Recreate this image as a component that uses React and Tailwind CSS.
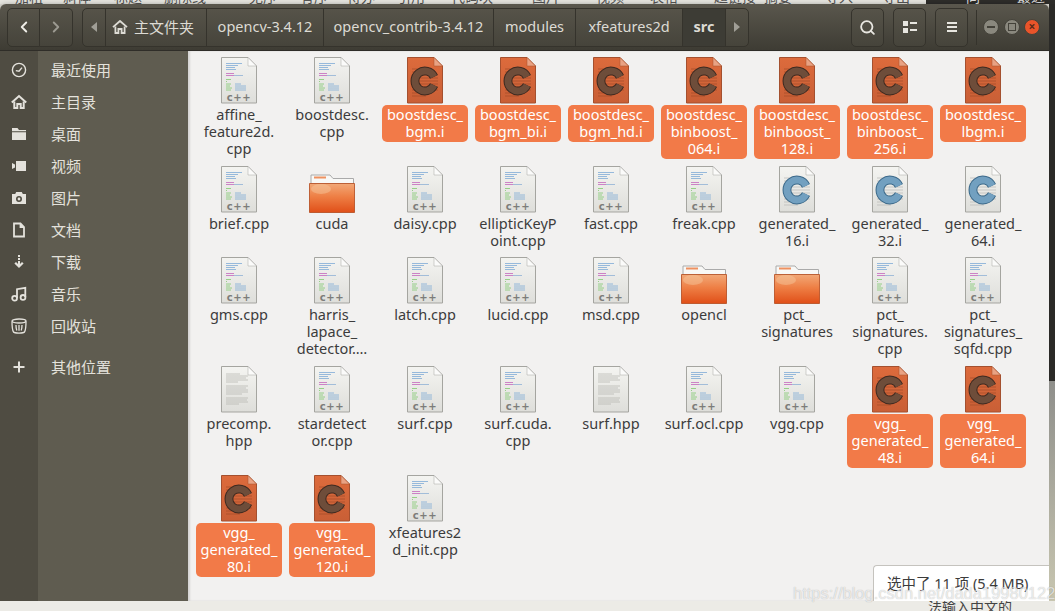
import React from 'react'
import { ChevronLeft, ChevronRight, Search } from 'lucide-react'

const HomeIcon = ({ size = 16 }) => (
  <svg width={size} height={size} viewBox="0 0 16 16" fill="none" stroke="currentColor" strokeWidth="1.8">
    <path d="M1 8.2 8 2l7 6.2" strokeLinejoin="round" />
    <path d="M3.4 7.5V14h3V10h3.2v4h3V7.5" />
  </svg>
)

const sideIcons = {
  clock: (
    <g fill="none" stroke="currentColor" strokeWidth="1.4">
      <circle cx="8" cy="8" r="6.6" />
      <path d="M4.8 8.6 8 9.2l3-3.6" />
    </g>
  ),
  home: (
    <g fill="none" stroke="currentColor" strokeWidth="2">
      <path d="M.8 8.4 8 2l7.2 6.4" />
      <path d="M3.3 7.5V14h3V10h3.4v4h3V7.5" />
    </g>
  ),
  folder: (
    <g fill="currentColor">
      <path d="M1 2h5.5l1.5 2h7v1.2H1z" />
      <path d="M1 6.2h14V14H1z" />
    </g>
  ),
  video: <path fill="currentColor" d="M5 3h10v10H5zM1 5l3 1.5v3L1 11z" />,
  camera: <path fill="currentColor" fillRule="evenodd" d="M1 4h3.2l1-2h5.6l1 2H15v10H1zM8 6a3 3 0 1 0 0 6 3 3 0 0 0 0-6zm0 1.6a1.4 1.4 0 1 1 0 2.8 1.4 1.4 0 0 1 0-2.8z" />,
  doc: <path fill="none" stroke="currentColor" strokeWidth="1.8" d="M3 1.500h6.500L13 5v9.500H3zM9.500 1.500V5H13" />,
  download: <path fill="currentColor" d="M7 1h2v2H7zM7 4h2v2H7zM7 7h2v3l2-2 1.600 1.400L8 14 3.400 9.400 5 8l2 2z" />,
  music: (
    <g fill="none" stroke="currentColor" strokeWidth="1.8">
      <circle cx="3.600" cy="12.200" r="2.400" />
      <circle cx="12" cy="11.400" r="2.400" />
      <path d="M6 12V3.200l8.300-1.400V11" />
    </g>
  ),
  trash: (
    <g fill="none" stroke="currentColor" strokeWidth="1.300">
      <ellipse cx="8" cy="3" rx="7" ry="2" />
      <path d="M1 3.400c0 4.500.4 8.600 1.500 10.600 1 1.400 10 1.400 11 0 1.100-2 1.500-6.100 1.500-10.600" />
      <path d="M5 7c0 2 .2 4 .8 5.500M8 7v5.800M11 7c0 2-.2 4-.8 5.500" />
    </g>
  ),
  plus: <path fill="currentColor" d="M7 2.500h2V7h4.500v2H9v4.500H7V9H2.500V7H7z" />,
}

const places = [
  ['clock', '最近使用'],
  ['home', '主目录'],
  ['folder', '桌面'],
  ['video', '视频'],
  ['camera', '图片'],
  ['doc', '文档'],
  ['download', '下载'],
  ['music', '音乐'],
  ['trash', '回收站'],
]

function Page({ id, from = '#f4f4f1', to = '#dededa', edge = '#a5a5a0', fold = '#fbfbfa', children }) {
  return (
    <svg width="48" height="48" viewBox="0 0 48 48">
      <defs>
        <linearGradient id={id} x1="0" y1="0" x2="0" y2="1">
          <stop offset="0" stopColor={from} />
          <stop offset="1" stopColor={to} />
        </linearGradient>
      </defs>
      <path d="M6.500 .5H33L41.500 9v37h-35z" fill={`url(#${id})`} stroke={edge} />
      <path d="M33 .5V9h8.500z" fill={fold} stroke={edge} strokeWidth=".5" />
      {children}
    </svg>
  )
}

const CodeLines = () => (
  <g strokeWidth=".8">
    <path d="M11 6.500h16M11 8.500h12M11 10.500h9M11 12.500h10" stroke="#7fabd6" />
    <path d="M11 16.500h8" stroke="#c467bd" />
    <path d="M11 18.500h8" stroke="#c467bd" />
    <path d="M19 18.500h9" stroke="#8fb1d4" />
    <path d="M11 22.500h5M11 24.500h1" stroke="#80c970" />
    <path d="M11 27h5M11 29h4M11 31h6M11 33h5" stroke="#80c970" />
    <path d="M20 27h6M20 29h11M20 31h11M20 33h11" stroke="#7fabd6" />
  </g>
)

const CppIcon = () => (
  <Page id="cppPage">
    <CodeLines />
    <text x="24" y="43.500" textAnchor="middle" fontFamily="'DejaVu Sans', sans-serif" fontSize="10" fontWeight="700" letterSpacing=".6" fill="#7c7c79">c++</text>
  </Page>
)

const HppIcon = () => (
  <Page id="hppPage">
    <path d="M11 8h14M11 10h22M11 12h20M11 14h22M11 16h12M11 20h22M11 22h20M11 24h22M11 26h22M11 28h16M11 32h22M11 34h21M11 36h22M11 38h13" stroke="#b2b2ae" strokeWidth=".7" />
  </Page>
)

const CIcon = ({ selected }) => {
  const ring = 'M33 19.800A10 10 0 1 0 33 28.200'
  return (
    <Page
      id={selected ? 'cPageSel' : 'cPage'}
      from={selected ? '#dd6b3c' : '#f4f4f1'}
      to={selected ? '#c95f36' : '#dededa'}
      edge={selected ? '#a4502f' : '#a5a5a0'}
      fold={selected ? '#e9a283' : '#fbfbfa'}
    >
      <path d="M11 12h16M11 15h12M11 18h8M11 21h26M11 24h26M11 27h26M11 30h26M11 33h26M11 36h20M11 39h14" stroke={selected ? '#a04c2a' : '#b8b8b4'} strokeWidth=".7" />
      <path d={ring} fill="none" stroke={selected ? '#3f2a20' : '#3d6a8a'} strokeWidth="8.800" />
      <path d={ring} fill="none" stroke={selected ? '#6e4d3a' : '#72a0c0'} strokeWidth="6.800" />
    </Page>
  )
}

const FolderIcon = () => (
  <svg width="48" height="48" viewBox="0 0 48 48">
    <defs>
      <linearGradient id="folderFill" x1="0" y1="0" x2="0" y2="1">
        <stop offset="0" stopColor="#f2a877" />
        <stop offset=".45" stopColor="#ee7f45" />
        <stop offset="1" stopColor="#e04f18" />
      </linearGradient>
    </defs>
    <path d="M3 18V9h19l3 3.500h20.500V18z" fill="#f8f8f6" stroke="#aaa" />
    <path d="M6 11.500h12" stroke="#ee9160" strokeWidth="2" />
    <path d="M1.500 17.500h45v29h-45z" fill="url(#folderFill)" stroke="#b3491c" strokeWidth=".8" />
    <ellipse cx="13" cy="23" rx="10" ry="5" fill="#f7c9a0" opacity=".45" />
  </svg>
)

const iconFor = { cpp: CppIcon, hpp: HppIcon, c: CIcon, dir: FolderIcon }

const files = [
  ['cpp', 'affine_\nfeature2d.\ncpp'], ['cpp', 'boostdesc.\ncpp'],
  ['c', 'boostdesc_\nbgm.i', 1], ['c', 'boostdesc_\nbgm_bi.i', 1], ['c', 'boostdesc_\nbgm_hd.i', 1],
  ['c', 'boostdesc_\nbinboost_\n064.i', 1], ['c', 'boostdesc_\nbinboost_\n128.i', 1], ['c', 'boostdesc_\nbinboost_\n256.i', 1],
  ['c', 'boostdesc_\nlbgm.i', 1],
  ['cpp', 'brief.cpp'], ['dir', 'cuda'], ['cpp', 'daisy.cpp'], ['cpp', 'ellipticKeyP\noint.cpp'], ['cpp', 'fast.cpp'],
  ['cpp', 'freak.cpp'], ['c', 'generated_\n16.i'], ['c', 'generated_\n32.i'], ['c', 'generated_\n64.i'],
  ['cpp', 'gms.cpp'], ['cpp', 'harris_\nlapace_\ndetector.…'], ['cpp', 'latch.cpp'], ['cpp', 'lucid.cpp'], ['cpp', 'msd.cpp'],
  ['dir', 'opencl'], ['dir', 'pct_\nsignatures'], ['cpp', 'pct_\nsignatures.\ncpp'], ['cpp', 'pct_\nsignatures_\nsqfd.cpp'],
  ['hpp', 'precomp.\nhpp'], ['cpp', 'stardetect\nor.cpp'], ['cpp', 'surf.cpp'], ['cpp', 'surf.cuda.\ncpp'], ['hpp', 'surf.hpp'],
  ['cpp', 'surf.ocl.cpp'], ['cpp', 'vgg.cpp'], ['c', 'vgg_\ngenerated_\n48.i', 1], ['c', 'vgg_\ngenerated_\n64.i', 1],
  ['c', 'vgg_\ngenerated_\n80.i', 1], ['c', 'vgg_\ngenerated_\n120.i', 1], ['cpp', 'xfeatures2\nd_init.cpp'],
]

const crumbs = [
  ['opencv-3.4.12', 'w-[117px]'],
  ['opencv_contrib-3.4.12', 'w-[170px]'],
  ['modules', 'w-[82px]'],
  ['xfeatures2d', 'w-[107px]'],
]

// toolbar of the editor page behind the window, only the top of it shows
const behind = [
  ['加粗', 'w-[48px]'], ['斜体', 'w-[51px]'], ['标题', 'w-[50px]'], ['删除线', 'w-[85px]'], ['无序', 'w-[51px]'],
  ['有序', 'w-[47px]'], ['待办', 'w-[50px]'], ['引用', 'w-[54px]'], ['代码块', 'w-[81px]'], ['图片', 'w-[64px]'],
  ['视频', 'w-[54px]'], ['表格', 'w-[64px]'], ['超链接', 'w-[50px]'], ['摘要', 'w-[61px]'], ['导入', 'w-[57px]'], ['导出', 'w-[44px]'],
]

const toolBtn = 'flex h-[39px] items-center justify-center rounded-[5px] border border-[#35332c] bg-gradient-to-b from-[#565349] to-[#46443b]'

function FileItem({ kind, name, selected }) {
  const Icon = iconFor[kind]
  return (
    <div className="flex flex-col items-center">
      <Icon selected={selected} />
      <div className={`w-[86px] rounded-[5px] pt-[1px] pb-[2px] text-center text-[14.5px] leading-[17px] whitespace-pre-line ${selected ? 'bg-[#f27a48] text-white' : 'text-[#3c3c3c]'}`}>
        {name}
      </div>
    </div>
  )
}

export default function App() {
  return (
    <div className="relative flex h-[611px] w-[1055px] flex-col overflow-hidden bg-[#dcdad2] font-['Noto_Sans','Noto_Sans_CJK_SC',sans-serif]">
      {/* app behind the window */}
      <div className="flex h-[4px] overflow-hidden bg-[#e6e5df] text-[14px] leading-[14px] text-[#555]">
        <div className="-mt-[10px] flex w-[926px] pl-[15px]">
          {behind.map(([label, width]) => (
            <span key={label} className={`${width} shrink-0`}>{label}</span>
          ))}
        </div>
        <div className="-mt-[10px] flex flex-1 gap-[32px] bg-[#2e2d2a] pl-[40px] text-[#ddd]">
          <span>同步</span>
          <span>最近修改</span>
        </div>
      </div>

      <div className="flex min-h-0 flex-1">
        <div className="flex w-[1049px] flex-col overflow-hidden rounded-t-[6px] shadow-[0_2px_6px_rgba(0,0,0,0.5)]">
          {/* header bar */}
          <div className="flex h-[47px] shrink-0 items-center border-b border-[#2f2d28] bg-gradient-to-b from-[#5a574d] to-[#3e3c34] pl-[7px] text-[#dddbd4]">
            <div className="flex">
              <button className={`${toolBtn} w-[33px] rounded-r-none`}><ChevronLeft className="text-[#f0eee8]" size={18} strokeWidth={2.5} /></button>
              <button className={`${toolBtn} w-[33px] rounded-l-none border-l-0`}><ChevronRight className="text-[#9c9a91]" size={18} strokeWidth={2.5} /></button>
            </div>

            <div className="ml-[9px] flex h-[39px] rounded-[5px] border border-[#35332c] bg-gradient-to-b from-[#565349] to-[#46443b] text-[15px]">
              <div className="flex w-[22px] items-center justify-center">
                <span className="h-0 w-0 border-y-[5px] border-r-[6px] border-y-transparent border-r-[#a09e96]" />
              </div>
              <div className="flex w-[101px] items-center gap-[6px] border-l border-[#35332c] pl-[6px]">
                <HomeIcon />
                <span>主文件夹</span>
              </div>
              {crumbs.map(([name, width]) => (
                <div key={name} className={`flex ${width} items-center justify-center border-l border-[#35332c] text-[14.5px]`}>
                  {name}
                </div>
              ))}
              <div className="flex w-[44px] items-center justify-center border-x border-[#35332c] bg-[#3d3c35] text-[14.5px] font-bold">src</div>
              <div className="flex w-[22px] items-center justify-center">
                <span className="h-0 w-0 border-y-[5px] border-l-[6px] border-y-transparent border-l-[#a09e96]" />
              </div>
            </div>

            <button className={`${toolBtn} ml-[102px] w-[33px] text-[#e8e6e0]`}><Search size={17} strokeWidth={2.6} /></button>
            <button className={`${toolBtn} ml-[9px] w-[33px] text-[#e8e6e0]`}>
              <svg width="14" height="12" viewBox="0 0 14 12" fill="currentColor"><path d="M0 0h5v5H0zM0 7h5v5H0zM7 1h7v2H7zM7 8h7v2H7z" /></svg>
            </button>
            <button className={`${toolBtn} ml-[9px] w-[33px] text-[#e8e6e0]`}>
              <svg width="12" height="12" viewBox="0 0 12 12" fill="currentColor"><path d="M1 1h10v2H1zM1 5h10v2H1zM1 9h10v2H1z" /></svg>
            </button>
            <div className="ml-[8px] h-[35px] w-px bg-[#35332c]" />
            <div className="ml-[6px] flex gap-[4.500px]">
              <div className="flex h-[16px] w-[16px] items-center justify-center rounded-full border border-[#44423a] bg-[#8a887e]">
                <span className="h-[2px] w-[8px] bg-[#44423a]" />
              </div>
              <div className="flex h-[16px] w-[16px] items-center justify-center rounded-full border border-[#44423a] bg-[#8a887e]">
                <span className="h-[8px] w-[8px] border border-[#44423a]" />
              </div>
              <div className="flex h-[16px] w-[16px] items-center justify-center rounded-full border border-[#44423a] bg-[#e9542a] text-[12px] leading-none font-bold text-[#5b2a18]">×</div>
            </div>
          </div>

          <div className="flex min-h-0 flex-1">
            {/* places sidebar */}
            <aside className="flex w-[188px] shrink-0 bg-gradient-to-r from-[#4f4c42] from-[38px] to-[#5f5c50] to-[38px] pt-[3px] text-[15px] text-[#e4e2dc]">
              <div className="w-full">
                {places.map(([icon, label]) => (
                  <div key={label} className="flex h-[32px] items-center">
                    <svg className="ml-[11px] shrink-0" width="16" height="16" viewBox="0 0 16 16">{sideIcons[icon]}</svg>
                    <span className="ml-[24px]">{label}</span>
                  </div>
                ))}
                <div className="mt-[9px] flex h-[32px] items-center">
                  <svg className="ml-[11px] shrink-0" width="16" height="16" viewBox="0 0 16 16">{sideIcons.plus}</svg>
                  <span className="ml-[24px]">其他位置</span>
                </div>
              </div>
            </aside>

            {/* file grid */}
            <main className="grid flex-1 grid-cols-[repeat(9,93px)] grid-rows-[109px_91px_109px_109px_109px] content-start bg-[#f2f1f0] pt-[6px] pl-[4.500px] shadow-[inset_2px_0_2px_rgba(0,0,0,0.12)]">
              {files.map(([kind, name, selected]) => (
                <FileItem key={name + kind} kind={kind} name={name} selected={!!selected} />
              ))}
            </main>
          </div>
        </div>
        <div className="flex flex-1 flex-col">
          <div className="h-[377px] bg-[#2b2a27]" />
          <div className="flex-1 bg-gradient-to-b from-[#8f8f8b] to-[#c8c6b0]" />
        </div>
      </div>

      <div className="relative h-[10px] overflow-hidden bg-[#ecebe6]">
        <span className="absolute -top-[1px] left-[928px] text-[14px] leading-[14px] text-[#444]">法输入中文的</span>
      </div>

      {/* floating status */}
      <div className="absolute top-[565px] left-[873px] flex h-[36px] w-[176px] items-center rounded-tl-[4px] border-t border-l border-[#c5c3be] bg-white pl-[13px] text-[14.5px] text-[#3c3c3c]">
        选中了 11 项 (5.4 MB)
      </div>

      {/* blog watermark */}
      <div className="absolute top-[583px] left-[793px] font-['Liberation_Sans',sans-serif] text-[16.5px] leading-[20px] text-white/70 [text-shadow:0_0_1px_rgba(0,0,0,0.3)]">
        https://blog.csdn.net/dada19980122
      </div>
    </div>
  )
}
